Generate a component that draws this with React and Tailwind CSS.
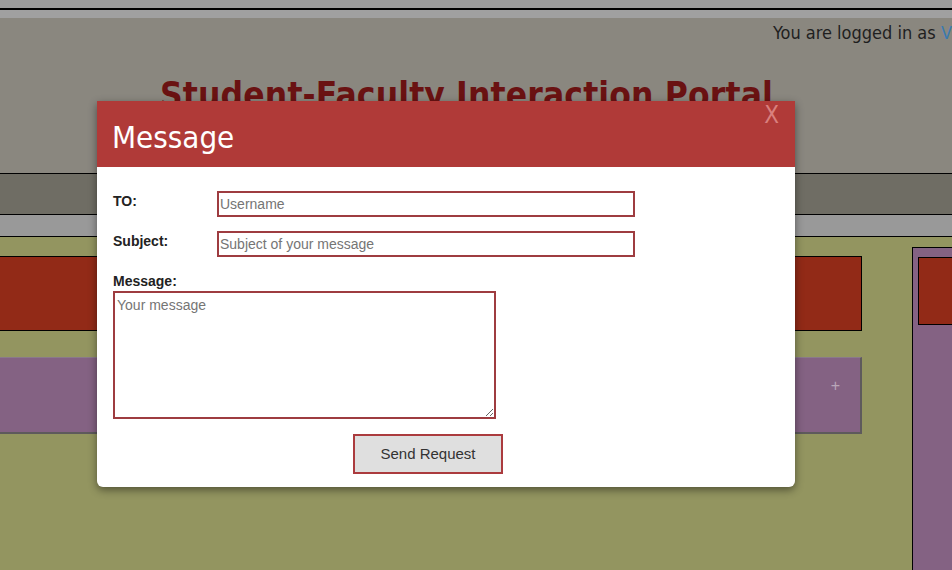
export default function App() {
  return (
    <div className="relative w-[952px] h-[570px] overflow-hidden bg-[#939560] font-['Liberation_Sans',Arial,sans-serif]">
      <div className="h-[8px] bg-[#9b9b9b]" />
      <div className="h-[2px] bg-black" />
      <div className="h-[8px] bg-[#a0a0a0]" />
      <div className="h-[155px] bg-[#8a877f] flex flex-col">
        <div className="pl-[773px] pt-[1px] whitespace-nowrap text-[18px] text-[#1f1f1f] font-['DejaVu_Sans_Condensed',sans-serif]">
          You are logged in as <span className="text-[#3a7ab0]">Vikas</span>
        </div>
        <div className="pl-[160px] pt-[23px] whitespace-nowrap text-[35px] font-bold text-[#6a1212] font-['DejaVu_Sans_Condensed',sans-serif] tracking-[0.15px]">
          Student-Faculty Interaction Portal
        </div>
      </div>
      <div className="h-[1px] bg-black" />
      <div className="h-[40px] bg-[#6f6d64]" />
      <div className="h-[1px] bg-black" />
      <div className="h-[21px] bg-[#999999]" />
      <div className="h-[1px] bg-black" />
      <div className="flex">
        <div className="w-[862px] shrink-0 flex flex-col">
          <div className="mt-[19px] h-[75px] bg-[#922a17] border border-black border-l-0" />
          <div className="mt-[26px] h-[77px] bg-[#846283] border-r-2 border-b-2 border-[#5e5a5c] border-t border-t-[#8a7a8a] flex items-start justify-end pr-[20px] pt-[20px]">
            <span className="text-[#b9a6b8] text-[16px] leading-none">+</span>
          </div>
        </div>
        <div className="ml-[50px] mt-[10px] w-[45px] shrink-0 h-[330px] bg-[#846283] border border-black pl-[5px] pt-[9px]">
          <div className="h-[68px] bg-[#922a17] border border-black border-r-0" />
        </div>
      </div>

      <div className="absolute left-[97px] top-[101px] w-[698px] h-[386px] bg-white rounded-b-[6px] shadow-[0_3px_8px_rgba(0,0,0,0.45)] overflow-hidden">
        <div className="relative h-[66px] bg-[#b03a38]">
          <div className="absolute left-[15px] top-[21px] text-[31px] leading-none text-white font-['DejaVu_Sans_Condensed',sans-serif]">Message</div>
          <div className="absolute right-[16px] top-[-4px] text-[24px] text-[#d9807e] font-['DejaVu_Sans_Condensed',sans-serif]">X</div>
        </div>
        <div className="pl-[16px] pt-[24px] text-[14px] text-[#222]">
          <div className="flex items-start">
            <label className="w-[104px] font-bold">TO:</label>
            <input className="w-[418px] h-[26px] border-2 border-[#9e3c40] px-[1px] text-[14px] placeholder:text-[#757575] outline-none" placeholder="Username" />
          </div>
          <div className="flex items-start mt-[14px]">
            <label className="w-[104px] font-bold">Subject:</label>
            <input className="w-[418px] h-[26px] border-2 border-[#9e3c40] px-[1px] text-[14px] placeholder:text-[#757575] outline-none" placeholder="Subject of your message" />
          </div>
          <div className="mt-[16px] font-bold leading-[16px]">Message:</div>
          <textarea className="block mt-[2px] w-[383px] h-[128px] border-2 border-[#9e3c40] px-[2px] py-[2px] text-[14px] placeholder:text-[#757575] outline-none" placeholder="Your message" />
          <div className="w-[630px] flex justify-center mt-[15px]">
            <button className="w-[150px] h-[40px] bg-[#dfdfdf] border-2 border-[#ab3b3e] text-[15px] text-[#333]">Send Request</button>
          </div>
        </div>
      </div>
    </div>
  );
}
